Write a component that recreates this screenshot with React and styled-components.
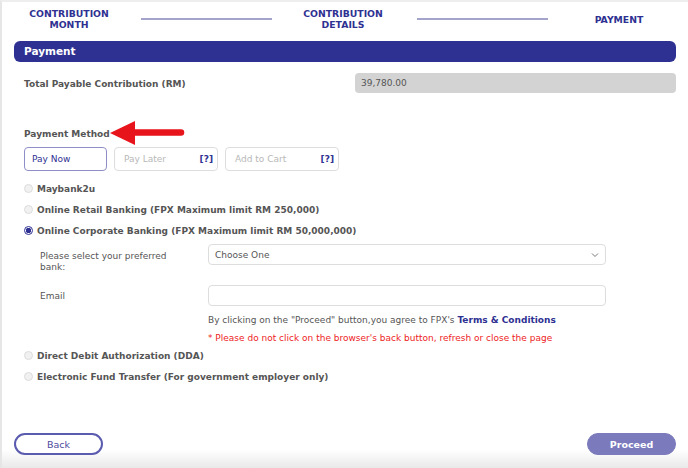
import React, { useState } from "react";
import styled, { createGlobalStyle } from "styled-components";

const GlobalStyle = createGlobalStyle`
  html, body {
    margin: 0;
    padding: 0;
    background: #ffffff;
  }
  * {
    box-sizing: border-box;
  }
`;

const steps = ["CONTRIBUTION\nMONTH", "CONTRIBUTION\nDETAILS", "PAYMENT"];

const methods = [
  { id: "m2u", label: "Maybank2u" },
  { id: "retail", label: "Online Retail Banking (FPX Maximum limit RM 250,000)" },
  { id: "corp", label: "Online Corporate Banking (FPX Maximum limit RM 50,000,000)" },
];

const otherMethods = [
  { id: "dda", label: "Direct Debit Authorization (DDA)" },
  { id: "eft", label: "Electronic Fund Transfer (For government employer only)" },
];

const RedArrow = () => (
  <ArrowSvg width="76" height="26" viewBox="0 0 76 26">
    <polygon points="0,13 25,1 25,25" fill="#e8141b" />
    <line x1="22" y1="12.5" x2="71" y2="12.5" stroke="#e8141b" strokeWidth="6.5" strokeLinecap="round" />
  </ArrowSvg>
);

const Chevron = () => (
  <ChevronSvg width="8" height="6" viewBox="0 0 8 6">
    <polyline points="1,1.5 4,4.5 7,1.5" fill="none" stroke="#777" strokeWidth="1" />
  </ChevronSvg>
);

const App = () => {
  const [method, setMethod] = useState("corp");

  return (
    <>
      <GlobalStyle />
      <Page>
        <Stepper>
          {steps.map((s, i) => (
            <React.Fragment key={s}>
              {i > 0 && <StepLine />}
              <Step>{s}</Step>
            </React.Fragment>
          ))}
        </Stepper>

        <SectionBar>Payment</SectionBar>

        <TotalRow>
          <Label>Total Payable Contribution (RM)</Label>
          <ReadOnlyField>39,780.00</ReadOnlyField>
        </TotalRow>

        <MethodHeading>
          <Label>Payment Method</Label>
          <RedArrow />
        </MethodHeading>

        <TabRow>
          <Tab active>Pay Now</Tab>
          <Tab>
            Pay Later<Help>[?]</Help>
          </Tab>
          <Tab>
            Add to Cart<Help>[?]</Help>
          </Tab>
        </TabRow>

        <RadioList>
          {methods.map((m) => (
            <RadioRow key={m.id} onClick={() => setMethod(m.id)}>
              <Radio checked={method === m.id} />
              {m.label}
            </RadioRow>
          ))}
        </RadioList>

        <SubForm>
          <FieldLabel>Please select your preferred bank:</FieldLabel>
          <SelectBox>
            Choose One
            <Chevron />
          </SelectBox>
          <FieldLabel center>Email</FieldLabel>
          <TextBox />
          <span />
          <Notes>
            <Note>
              By clicking on the "Proceed" button,you agree to FPX's <Terms>Terms &amp; Conditions</Terms>
            </Note>
            <Warning>* Please do not click on the browser's back button, refresh or close the page</Warning>
          </Notes>
        </SubForm>

        <RadioList tight>
          {otherMethods.map((m) => (
            <RadioRow key={m.id} onClick={() => setMethod(m.id)}>
              <Radio checked={method === m.id} />
              {m.label}
            </RadioRow>
          ))}
        </RadioList>

        <Spacer />

        <Footer>
          <BackButton>Back</BackButton>
          <ProceedButton>Proceed</ProceedButton>
        </Footer>
      </Page>
    </>
  );
};

export default App;

const Page = styled.div`
  width: 688px;
  height: 468px;
  display: flex;
  flex-direction: column;
  padding: 0 12px 0 12px;
  border-top: 2px solid #eeeeee;
  border-left: 2px solid #e6e6e6;
  background: linear-gradient(to bottom, #ffffff 0%, #ffffff 96%, #e9e9e9 100%);
  font-family: "DejaVu Sans", Verdana, sans-serif;
  color: #555555;
  overflow: hidden;
`;

const Stepper = styled.div`
  display: grid;
  grid-template-columns: 134px 1fr 138px 1fr 138px;
  align-items: center;
  margin: 5px -12px 0 -12px;
  height: 24px;
`;

const Step = styled.div`
  white-space: pre-line;
  text-align: center;
  font-size: 9.3px;
  font-weight: bold;
  line-height: 11px;
  color: #2e3192;
`;

const StepLine = styled.div`
  height: 1.5px;
  margin: 0 2px 0 5px;
  background: #a3a3cc;
`;

const SectionBar = styled.div`
  margin-top: 10px;
  height: 21px;
  border-radius: 6px;
  background: #2e3192;
  color: #ffffff;
  font-size: 10.5px;
  font-weight: bold;
  line-height: 21px;
  padding-left: 10px;
`;

const TotalRow = styled.div`
  display: grid;
  grid-template-columns: 331px 1fr;
  align-items: center;
  margin-top: 11px;
  padding-left: 10px;
`;

const Label = styled.div`
  font-size: 9px;
  font-weight: bold;
  color: #555555;
  padding-top: 2px;
`;

const ReadOnlyField = styled.div`
  height: 20px;
  border-radius: 4px;
  background: #d3d3d3;
  font-size: 9px;
  line-height: 20px;
  padding-left: 6px;
  color: #555555;
`;

const MethodHeading = styled.div`
  display: flex;
  align-items: center;
  margin-top: 27px;
  padding-left: 10px;
  height: 26px;
`;

const ArrowSvg = styled.svg`
  margin-left: 0px;
`;

const TabRow = styled.div`
  display: flex;
  gap: 7px;
  margin-top: 1px;
  padding-left: 10px;
`;

const Tab = styled.div`
  display: flex;
  align-items: center;
  justify-content: space-between;
  width: ${(p) => (p.active ? "83px" : "104px")};
  height: 24px;
  padding: ${(p) => (p.active ? "0 7px" : "0 4px 0 9px")};
  border: 1px solid ${(p) => (p.active ? "#8f8fc8" : "#dddddd")};
  border-radius: 4px;
  font-size: 9px;
  color: ${(p) => (p.active ? "#2e3192" : "#b8b8b8")};
  &:last-child {
    width: 114px;
  }
`;

const Help = styled.span`
  font-weight: bold;
  color: #2e3192;
`;

const RadioList = styled.div`
  display: flex;
  flex-direction: column;
  gap: 8px;
  margin-top: ${(p) => (p.tight ? "6px" : "11px")};
  padding-left: 10px;
`;

const RadioRow = styled.div`
  display: flex;
  align-items: center;
  gap: 4px;
  height: 13px;
  font-size: 9px;
  font-weight: bold;
  color: #555555;
  cursor: pointer;
`;

const Radio = styled.span`
  width: 9px;
  height: 9px;
  border-radius: 50%;
  border: 1px solid ${(p) => (p.checked ? "#2e3192" : "#dcdcdc")};
  background: ${(p) =>
    p.checked ? "radial-gradient(circle, #2e3192 0 2.5px, #ffffff 3px)" : "#f1f1f1"};
`;

const SubForm = styled.div`
  display: grid;
  grid-template-columns: 168px 398px;
  grid-template-rows: 21px 21px auto;
  row-gap: 20px;
  margin-top: 7px;
  padding-left: 26px;
`;

const FieldLabel = styled.div`
  font-size: 9px;
  line-height: 11px;
  padding-top: ${(p) => (p.center ? "6px" : "7px")};
  padding-right: 30px;
  color: #555555;
`;

const SelectBox = styled.div`
  display: flex;
  align-items: center;
  justify-content: space-between;
  height: 21px;
  padding: 0 6px 0 6px;
  border: 1px solid #dddddd;
  border-radius: 4px;
  font-size: 9px;
  color: #555555;
`;

const ChevronSvg = styled.svg`
  display: block;
`;

const TextBox = styled.div`
  height: 21px;
  border: 1px solid #dddddd;
  border-radius: 4px;
`;

const Notes = styled.div`
  display: flex;
  flex-direction: column;
  gap: 8px;
  margin-top: -11px;
`;

const Note = styled.div`
  font-size: 9px;
  color: #555555;
`;

const Terms = styled.span`
  font-weight: bold;
  color: #2e3192;
`;

const Warning = styled.div`
  font-size: 9px;
  color: #ee1c25;
`;

const Spacer = styled.div`
  flex: 1;
`;

const Footer = styled.div`
  display: flex;
  justify-content: space-between;
  margin-bottom: 13px;
`;

const PillButton = styled.button`
  width: 89px;
  height: 22px;
  border-radius: 11px;
  font-family: "DejaVu Sans", Verdana, sans-serif;
  font-size: 9.5px;
  cursor: pointer;
`;

const BackButton = styled(PillButton)`
  border: 2px solid #5b5baf;
  background: #ffffff;
  color: #4b4ba0;
`;

const ProceedButton = styled(PillButton)`
  border: 1px solid #7a7abc;
  background: #7a7abc;
  color: #ffffff;
  font-weight: bold;
`;
